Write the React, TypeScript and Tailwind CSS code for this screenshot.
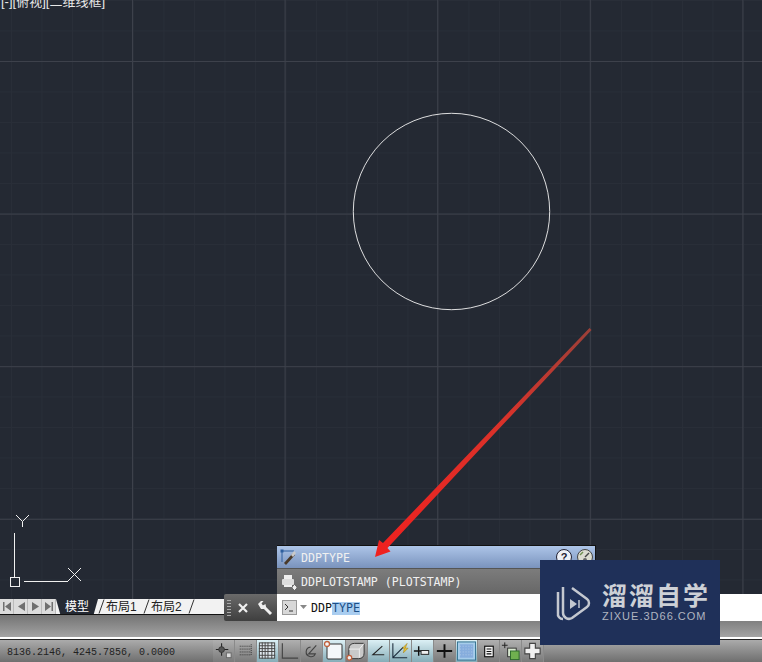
import type { ReactNode } from "react";

const statusIcons: { on: boolean; w: string; icon: ReactNode }[] = [
  {
    on: false,
    w: "w-[22px]",
    icon: (
      <>
        <path d="M9 3v13M3 9.500h13" stroke="#222" strokeWidth="1.100" />
        <circle cx="9" cy="9.500" r="3" fill="#555" stroke="#333" />
        <rect x="14" y="13" width="5" height="5" fill="#ddd" stroke="#666" />
      </>
    ),
  },
  {
    on: false,
    w: "w-[22px]",
    icon: <path d="M5 6h12M5 9h12M5 12h12M5 15h12M17 4v12" stroke="#333" strokeWidth="1" strokeDasharray="1 1" fill="none" />,
  },
  {
    on: true,
    w: "w-[22px]",
    icon: (
      <>
        <rect x="2.500" y="2.500" width="16" height="16" fill="#dfe8ee" stroke="#444" />
        <path d="M5.500 2v17M8.500 2v17M11.500 2v17M15.500 2v17M2 5.500h17M2 8.500h17M2 11.500h17M2 15.500h17" stroke="#444" strokeWidth="1" />
      </>
    ),
  },
  { on: false, w: "w-[22px]", icon: <path d="M3.500 3v15.500H20" stroke="#444" strokeWidth="1.200" fill="none" /> },
  {
    on: false,
    w: "w-[22px]",
    icon: <path d="M10 7a5 5 0 1 0 5 7H8l8-9" stroke="#444" strokeWidth="1.200" fill="none" />,
  },
  {
    on: true,
    w: "w-[23px]",
    icon: (
      <>
        <rect x="4" y="4" width="15" height="15" rx="1" fill="#f4f8fa" stroke="#333" />
        <circle cx="4" cy="4" r="2.500" fill="#f5f5f5" stroke="#c0603c" strokeWidth="1.300" />
      </>
    ),
  },
  {
    on: false,
    w: "w-[22px]",
    icon: (
      <>
        <path d="M3 18V9q0-6 6-6h10v10q0 6-6 6H3z" fill="#c9c9c9" stroke="#333" />
        <path d="M3 9h11v9M14 9l5-6" stroke="#eee" fill="none" />
        <circle cx="3.500" cy="18" r="2.500" fill="#eee" stroke="#c0603c" strokeWidth="1.300" />
      </>
    ),
  },
  { on: true, w: "w-[22px]", icon: <path d="M15 6L5 15h12" stroke="#222" strokeWidth="1.100" fill="none" /> },
  {
    on: true,
    w: "w-[22px]",
    icon: (
      <>
        <path d="M3 3v15h15M3 18L14 7" stroke="#1a2a3a" strokeWidth="1.100" fill="none" />
        <path d="M13 8l5-5-2 5h3l-5 5 1-5z" fill="#e8c030" stroke="#9a7a10" strokeWidth="0.500" />
      </>
    ),
  },
  {
    on: true,
    w: "w-[22px]",
    icon: (
      <>
        <path d="M7 6v10M2 11h9" stroke="#111" strokeWidth="1.500" />
        <rect x="9.500" y="10.500" width="8" height="4" fill="#eee" stroke="#222" />
      </>
    ),
  },
  { on: false, w: "w-[22px]", icon: <path d="M11 4v14M3 11h16" stroke="#111" strokeWidth="2" /> },
  {
    on: true,
    w: "w-[22px]",
    icon: (
      <>
        <rect x="1.500" y="1.500" width="19" height="19" fill="#a6cdea" stroke="#2f6f8f" />
        <rect x="4" y="4" width="14" height="14" fill="#86addd" />
        <path d="M4 6h14M4 9h14M4 12h14M4 15h14" stroke="#b4cde8" strokeDasharray="1 2" />
      </>
    ),
  },
  {
    on: false,
    w: "w-[22px]",
    icon: (
      <>
        <rect x="7" y="6" width="9" height="11" fill="#f2f2f2" stroke="#111" strokeWidth="1.200" />
        <path d="M9 9h5M9 11.500h5M9 14h5" stroke="#111" strokeWidth="1.100" />
      </>
    ),
  },
  {
    on: false,
    w: "w-[22px]",
    icon: (
      <>
        <path d="M5 2v6M2 5h6" stroke="#222" strokeWidth="1" />
        <rect x="8" y="8" width="9" height="9" fill="#d8e8d0" stroke="#333" />
        <rect x="11" y="11" width="9" height="9" fill="#6fb04f" stroke="#2d6a2d" />
      </>
    ),
  },
  {
    on: false,
    w: "w-[22px]",
    icon: <path d="M8 3h6v5h5v6h-5v5H8v-5H3V8h5z" fill="#f0f0f0" stroke="#444" strokeWidth="1.200" />,
  },
];

function NavButton({ d }: { d: string }) {
  return (
    <div className="flex h-full w-[14px] items-center justify-center border-r border-[#bbb] bg-[#dcdcdc]">
      <svg width="12" height="13" viewBox="0 0 12 13">
        <path d={d} fill="#6f6f6f" />
      </svg>
    </div>
  );
}

function TabSlash() {
  return (
    <svg className="shrink-0" width="7" height="15" viewBox="0 0 7 15">
      <path d="M1 14.500L6 0.500" stroke="#333" strokeWidth="1" fill="none" />
    </svg>
  );
}

export default function App() {
  return (
    <div className="relative flex h-[662px] w-[762px] flex-col overflow-hidden bg-[#242933] font-['Liberation_Sans','Noto_Sans_CJK_SC',sans-serif]">
      {/* drawing area */}
      <div className="relative h-[599px] bg-[#242933] bg-[linear-gradient(to_right,#3d414b_1px,transparent_1px),linear-gradient(to_bottom,#3d414b_1px,transparent_1px),linear-gradient(to_right,#292e38_1px,transparent_1px),linear-gradient(to_bottom,#292e38_1px,transparent_1px)] bg-[size:152.6px_100%,100%_152.6px,30.5px_100%,100%_30.5px] bg-[position:132px_0,0_61px,11px_0,0_0]">
        <div className="absolute left-[1px] top-[-5px] whitespace-nowrap text-[13px] leading-[14px] text-[#e8e8e8]">
          [-][俯视][二维线框]
        </div>

        {/* circle */}
        <svg className="absolute left-[350px] top-[110px]" width="204" height="204" viewBox="0 0 204 204">
          <circle cx="101.500" cy="101.500" r="98.200" fill="none" stroke="#f2f2f2" strokeWidth="0.900" />
        </svg>

        {/* ucs icon */}
        <svg className="absolute left-[5px] top-[510px]" width="85" height="80" viewBox="0 0 85 80">
          <path
            d="M9.500 23v44M19 71.500h44M11 5l6.500 6.500L24 5M17.500 11.500V17M63 58l13 13M76 58L63 71"
            stroke="#f0f0f0"
            strokeWidth="1"
            fill="none"
          />
          <rect x="5.500" y="67.500" width="9" height="9" fill="none" stroke="#f0f0f0" />
        </svg>
      </div>

      {/* layout tabs */}
      <div className="flex h-[16px] items-stretch border-b border-[#111] bg-[#f2f2f2] text-[12px] leading-[15px] text-[#222]">
        <NavButton d="M2 2h1.500v9H2zM10 2v9L4 6.500z" />
        <NavButton d="M10 2v9L3 6.500z" />
        <NavButton d="M3 2v9l7-4.500z" />
        <NavButton d="M2 2v9l6-4.500zM8.500 2H10v9H8.500z" />
        <div className="flex w-[42px] items-center justify-center bg-[#242933] pt-[1px] text-white [clip-path:polygon(0_0,100%_0,90%_100%,10%_100%)]">
          模型
        </div>
        <TabSlash />
        <div className="flex w-[38px] items-center pl-[1px] pt-[1px]">布局1</div>
        <TabSlash />
        <div className="flex w-[38px] items-center pl-[1px] pt-[1px]">布局2</div>
        <TabSlash />
      </div>

      {/* band */}
      <div className="h-[22px] bg-gradient-to-b from-[#747474] to-[#a3a3a3]" />
      <div className="h-[2px] bg-white" />
      <div className="h-[1px] bg-[#222]" />

      {/* status bar */}
      <div className="flex h-[22px] items-stretch bg-gradient-to-b from-[#ababab] to-[#6f6f6f]">
        <div className="w-[213px] pl-[7px] pt-[6px] font-['Liberation_Mono',monospace] text-[10px] leading-[14px] text-[#222]">
          8136.2146, 4245.7856, 0.0000
        </div>
        {statusIcons.map((b, i) => (
          <div
            key={i}
            className={`flex items-center justify-center border-r border-[#8a8a8a] ${b.w} ${
              b.on ? "bg-gradient-to-b from-[#dcf0f5] to-[#86adb8]" : "bg-gradient-to-b from-[#b0b0b0] to-[#7a7a7a]"
            }`}
          >
            <svg width="22" height="22" viewBox="0 0 22 22">
              {b.icon}
            </svg>
          </div>
        ))}
      </div>

      {/* command line */}
      <div className="absolute left-[224px] top-[594px] flex h-[27px] w-[538px] items-stretch">
        <div className="flex w-[53px] items-center rounded-l-[2px] bg-gradient-to-b from-[#6a6a6a] to-[#3f3f3f] pl-[3px]">
          <div className="h-[18px] w-[4px] bg-[radial-gradient(circle,#aaa_1px,transparent_1px)] bg-[size:2px_3px]" />
          <svg className="ml-[6px]" width="12" height="12" viewBox="0 0 12 12">
            <path d="M2 2l8 8M10 2l-8 8" stroke="#f0f0f0" strokeWidth="2.200" />
          </svg>
          <svg className="ml-[8px]" width="16" height="16" viewBox="0 0 16 16">
            <path d="M6 6l8 8" stroke="#f0f0f0" strokeWidth="3" />
            <path d="M1 4l3-3h2.500L4.500 3.500 6 5.500l2.500-1.500.5 3-2 2-3 0z" fill="#f0f0f0" />
          </svg>
        </div>
        <div className="flex flex-1 items-center bg-white pl-[5px] font-['DejaVu_Sans_Mono',monospace] text-[11.6px] leading-[13px] text-[#111]">
          <svg width="15" height="15" viewBox="0 0 15 15">
            <rect x="0.500" y="0.500" width="14" height="14" fill="#d8d8d8" stroke="#999" />
            <path d="M3 4l3 3-3 3M7 11h4" stroke="#333" fill="none" />
          </svg>
          <svg className="ml-[3px]" width="7" height="5" viewBox="0 0 7 5">
            <path d="M0 0h7L3.500 4z" fill="#888" />
          </svg>
          <span className="ml-[4px] mt-[2px]">DDP</span>
          <span className="mt-[2px] bg-[#a9cdf0] text-[#1c4f86]">TYPE</span>
        </div>
      </div>

      {/* autocomplete list */}
      <div className="absolute left-[277px] top-[545px] h-[49px] w-[319px] border-t border-r border-[#111] font-['DejaVu_Sans_Mono',monospace] text-[11.6px] text-[#f0f0f0]">
        <div className="flex h-[23px] items-center border-b border-[#555] bg-gradient-to-b from-[#adc5e8] to-[#7a93bd] pl-[3px]">
          <svg width="18" height="18" viewBox="0 0 18 18">
            <path d="M2 3v11M2 3h12" stroke="#2e5f9e" strokeWidth="1" fill="none" />
            <rect x="0.500" y="1.500" width="3" height="3" fill="#2e5f9e" />
            <path d="M4 15l9-10 2 2-9 10z" fill="#4a3a2a" />
            <path d="M11 7l3-4 2 2-3 4z" fill="#c9c9c9" />
          </svg>
          <span className="ml-[3px] pt-[3px]">DDPTYPE</span>
          <div className="ml-auto mr-[2px] flex gap-[5px]">
            <div className="flex h-[16px] w-[16px] items-center justify-center rounded-full border border-[#223] bg-[#eef1f7] font-['Liberation_Sans',sans-serif] text-[11px] font-bold text-[#223]">
              ?
            </div>
            <svg width="16" height="16" viewBox="0 0 16 16">
              <circle cx="8" cy="8" r="7.500" fill="#dcdcd0" stroke="#444" />
              <path d="M8 8l4-4" stroke="#444" strokeWidth="1.500" />
              <path d="M3 6l3-3" stroke="#6f8f4f" strokeWidth="1.500" />
              <circle cx="8" cy="11" r="2" fill="#666" />
            </svg>
          </div>
        </div>
        <div className="flex h-[25px] items-center bg-gradient-to-b from-[#7c7c7c] to-[#676767] pl-[3px]">
          <svg width="18" height="18" viewBox="0 0 18 18">
            <rect x="4" y="2" width="8" height="4" fill="#eee" />
            <rect x="2" y="6" width="12" height="6" rx="1" fill="#ddd" />
            <rect x="4" y="12" width="8" height="2" fill="#eee" />
            <path d="M13 13l3 3M16 13l-3 3M14.500 12v5M12.500 14.500h4" stroke="#eee" />
          </svg>
          <span className="ml-[3px] pt-[2px]">DDPLOTSTAMP (PLOTSTAMP)</span>
        </div>
      </div>

      {/* red annotation arrow */}
      <svg className="absolute left-0 top-0" width="762" height="662" viewBox="0 0 762 662">
        <defs>
          <linearGradient id="shaft" x1="375" y1="557" x2="591" y2="329" gradientUnits="userSpaceOnUse">
            <stop offset="0" stopColor="#f0211f" />
            <stop offset="0.6" stopColor="#d9322a" />
            <stop offset="1" stopColor="#9c4038" />
          </linearGradient>
        </defs>
        <path d="M375 557l4-17 4 3 206.500-215 2 2L387.500 548l3 3.500z" fill="url(#shaft)" />
      </svg>

      {/* watermark */}
      <div className="absolute left-[540px] top-[560px] flex h-[85px] w-[180px] items-center bg-[#1f3059] pl-[15px] text-[#cdd0d6]">
        <svg width="36" height="38" viewBox="0 0 36 38">
          <path d="M8 3v26a6 6 0 0 0 9 5l15-11a5 5 0 0 0 0-8L17 4" fill="none" stroke="#c4c8d0" strokeWidth="2.500" />
          <path d="M3 8v21a5 5 0 0 0 5 6" fill="none" stroke="#c4c8d0" strokeWidth="2.500" />
          <path d="M15 15l7 5-7 5z" fill="#c4c8d0" />
          <path d="M24 16v8" stroke="#c4c8d0" strokeWidth="1.500" />
        </svg>
        <div className="ml-[11px] flex flex-col">
          <div className="whitespace-nowrap text-[25px] font-bold leading-[27px] tracking-[2px]">溜溜自学</div>
          <div className="whitespace-nowrap text-[11px] leading-[12px] tracking-[1px] text-[#b0b5c0]">ZIXUE.3D66.COM</div>
        </div>
      </div>
    </div>
  );
}
